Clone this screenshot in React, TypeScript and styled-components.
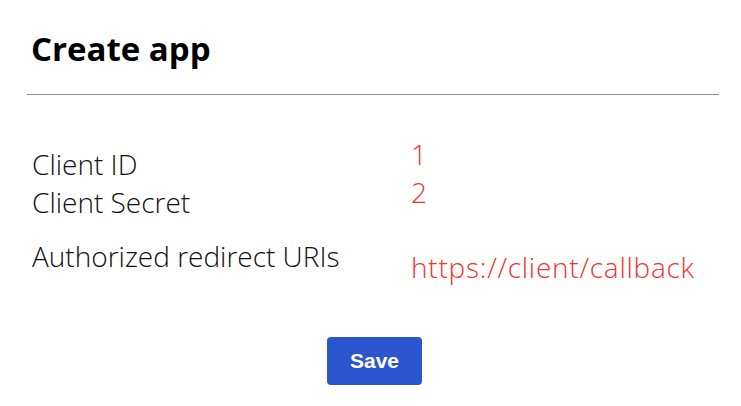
import React from "react";
import styled, { createGlobalStyle } from "styled-components";

const GlobalStyle = createGlobalStyle`
  html, body {
    margin: 0;
    padding: 0;
    background: #ffffff;
  }
  body {
    font-family: "Open Sans", "Noto Sans", sans-serif;
    color: #111111;
  }
`;

// Whole dialog.
const Page = styled.div`
  width: 741px;
  height: 406px;
  box-sizing: border-box;
  padding: 26px 22px 0 27px;
  display: flex;
  flex-direction: column;
`;

// "Create app" heading.
const Title = styled.h1`
  margin: 0 0 23px 4px;
  font-size: 33px;
  font-weight: 700;
  line-height: 45px;
  color: #000000;
`;

// Rule under the heading.
const Divider = styled.hr`
  margin: 0;
  border: none;
  border-top: 1.5px solid #8a8a8a;
`;

// Label / value grid.
const Fields = styled.div`
  display: flex;
  flex-direction: column;
  gap: 16px;
  margin-top: 50px;
  padding-left: 5px;
`;

const FieldGroup = styled.div`
  display: grid;
  grid-template-columns: 379px 1fr;
  align-items: start;
`;

const Labels = styled.div`
  display: flex;
  flex-direction: column;
  font-size: 28px;
  font-weight: 300;
  line-height: 38px;
`;

const Values = styled.div<{ $offset: number }>`
  display: flex;
  flex-direction: column;
  margin-top: ${({ $offset }) => $offset}px;
  font-size: 28px;
  font-weight: 300;
  letter-spacing: 0.75px;
  line-height: 38px;
  color: #f0352b;
`;

// Button row.
const Actions = styled.div`
  display: flex;
  justify-content: center;
  margin-top: 51px;
  padding-left: 3px;
`;

const SaveButton = styled.button`
  width: 95px;
  height: 48px;
  border: none;
  border-radius: 4px;
  background: #2c56d0;
  color: #ffffff;
  font-family: "Liberation Sans", Arial, sans-serif;
  font-size: 21px;
  font-weight: 700;
  cursor: pointer;
`;

const App = () => {
  return (
    <>
      <GlobalStyle />
      <Page>
        <Title>Create app</Title>
        <Divider />
        <Fields>
          <FieldGroup>
            <Labels>
              <span>Client ID</span>
              <span>Client Secret</span>
            </Labels>
            <Values $offset={-10}>
              <span>1</span>
              <span>2</span>
            </Values>
          </FieldGroup>
          <FieldGroup>
            <Labels>
              <span>Authorized redirect URIs</span>
            </Labels>
            <Values $offset={11}>
              <span>https://client/callback</span>
            </Values>
          </FieldGroup>
        </Fields>
        <Actions>
          <SaveButton>Save</SaveButton>
        </Actions>
      </Page>
    </>
  );
};

export default App;
